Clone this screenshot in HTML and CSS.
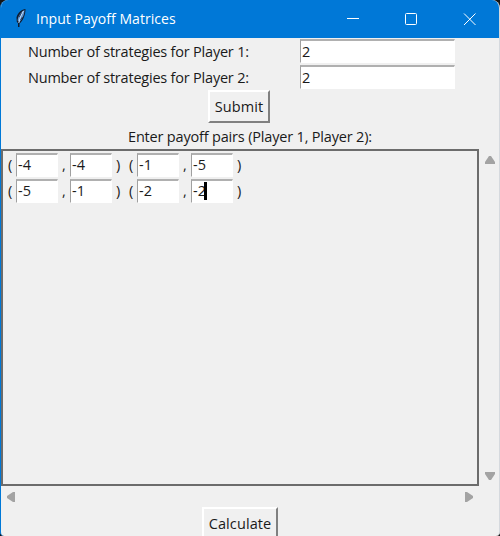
FILE: index.html
```html
<!DOCTYPE html>
<html lang="en">
<head>
<meta charset="utf-8">
<title>Input Payoff Matrices</title>
<link rel="stylesheet" href="styles.css">
</head>
<body>
<main class="window">
  <header class="titlebar">
    <svg class="feather" width="14" height="20" viewBox="0 0 14 20">
      <path d="M11.5 1C8 1 3.500 5 2.500 9.500L2.800 14 4 15V19H5.500V15.500C9 13 11.500 7 11.500 1Z" fill="#101c30"/>
      <path d="M10.500 2C7 3.500 4 8 3.600 12.500L5.500 14C8.500 11 10.500 6 10.500 2Z" fill="#5d93d1"/>
      <path d="M9.500 3C7 7 5.500 11 4.800 15" fill="none" stroke="#c5ddf6"/>
      <path d="M7.500 4.500L5.200 9M8.500 9L6.500 12" stroke="#17253d" stroke-width=".7"/>
    </svg>
    <h1 class="title">Input Payoff Matrices</h1>
    <svg class="controls" width="134" height="14" viewBox="0 0 134 14" fill="none" stroke="#fff">
      <path d="M1 6.500H13"/>
      <rect x="59.500" y="1.500" width="11" height="11" rx="1"/>
      <path d="M118 1.500L129.500 13M129.500 1.500L118 13"/>
    </svg>
  </header>
  <section class="settings">
    <label class="caption">Number of strategies for Player 1:</label><div class="entry">2</div>
    <label class="caption">Number of strategies for Player 2:</label><div class="entry">2</div>
  </section>
  <div class="button submit">Submit</div>
  <p class="prompt">Enter payoff pairs (Player 1, Player 2):</p>
  <div class="scroll-area">
    <div class="canvas">
      <div class="matrix">
        <span>(</span><div class="entry">-4</div><span>,</span><div class="entry">-4</div><span>)</span>
        <span>(</span><div class="entry">-1</div><span>,</span><div class="entry">-5</div><span>)</span>
        <span>(</span><div class="entry">-5</div><span>,</span><div class="entry">-1</div><span>)</span>
        <span>(</span><div class="entry">-2</div><span>,</span><div class="entry focused">-2<i class="caret"></i></div><span>)</span>
      </div>
    </div>
    <div class="vbar">
      <svg width="10" height="8" viewBox="0 0 10 8"><path d="M4 0H6L10 6V8H0V6Z"/></svg>
      <svg width="10" height="8" viewBox="0 0 10 8"><path d="M0 0H10V2L6 8H4L0 2Z"/></svg>
    </div>
    <div class="hbar">
      <svg width="8" height="10" viewBox="0 0 8 10"><path d="M8 0V10H6L0 6V4L6 0Z"/></svg>
      <svg width="8" height="10" viewBox="0 0 8 10"><path d="M0 0H2L8 4V6L2 10H0Z"/></svg>
    </div>
  </div>
  <div class="button calculate">Calculate</div>
</main>
</body>
</html>
```
FILE: styles.css
```css
* { box-sizing: border-box; }
body {
  margin: 0;
  background: #151515;
  font: 14.5px/20px "Open Sans", "Noto Sans", sans-serif;
  letter-spacing: -0.21px;
  color: #1a1a1a;
}
.window {
  width: 500px;
  height: 536px;
  overflow: hidden;
  border-left: 1px solid #0078d7;
  border-right: 1px solid #d5d9de;
  border-radius: 8px 8px 4px 4px;
  background: #f0f0f0;
}
.titlebar {
  display: flex;
  align-items: center;
  height: 38px;
  margin: 0 -1px;
  padding: 0 20px 0 14px;
  background: #0078d7;
  color: #fff;
}
.feather { margin-top: -2px; }
.title {
  flex: 1;
  margin: 0 0 0 8px;
  font-size: 14px;
  font-weight: 400;
  letter-spacing: 0.04px;
  white-space: nowrap;
}
.settings {
  display: grid;
  grid-template-columns: 299px 155px;
  grid-auto-rows: 26px;
  padding-top: 1px;
}
.caption { padding: 3px 0 0 27px; white-space: nowrap; }
.entry {
  height: 24px;
  padding: 1px 0 0 1px;
  border: 1px solid #fff;
  border-top: 2px solid #b0b0b0;
  border-left-color: #a0a0a0;
  background: #fff;
  letter-spacing: 0.2px;
}
.button {
  height: 33px;
  padding-top: 5px;
  border: 2px solid #fff;
  border-right-color: #808080;
  border-bottom-color: #808080;
  letter-spacing: 0.1px;
  text-align: center;
}
.submit { width: 62px; margin: -1px 0 0 207px; }
.prompt {
  height: 22px;
  margin: 4px 0 0 127px;
  letter-spacing: -0.18px;
  white-space: nowrap;
}
.scroll-area {
  display: grid;
  grid-template-columns: 478px 1fr;
  grid-template-rows: 337px 21px;
}
.canvas {
  padding: 2px 0 0 5px;
  border: 2px solid #6c6c6c;
}
.matrix {
  display: grid;
  grid-template-columns: 8px 42px 12px 42px 18px 7px 42px 12px 42px 18px;
  grid-auto-rows: 26px;
}
.matrix .entry { padding-top: 0; }
.matrix span { padding-top: 2px; }
.matrix span:nth-child(5n+3),
.matrix span:nth-child(5n) { padding-left: 4px; }
.matrix span:nth-child(10n+6) { margin-left: -1px; }
.focused { display: flex; }
.caret { width: 3px; height: 18px; margin: 1px 0 0 -2px; background: #000; }
.vbar, .hbar {
  display: flex;
  justify-content: space-between;
  align-items: center;
  fill: #a3a3a3;
}
.vbar { flex-direction: column; padding: 7px 0 6px 2px; }
.hbar { padding: 1px 6px 0; }
.calculate { width: 76px; margin-left: 201px; }
```
